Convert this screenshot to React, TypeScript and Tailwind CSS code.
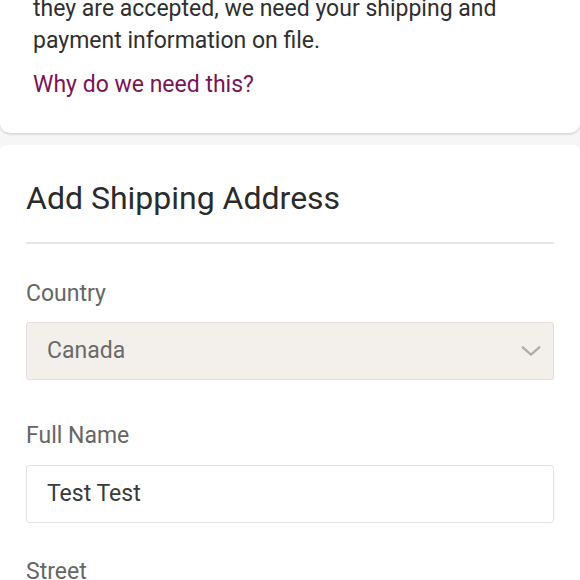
import React from 'react';

const font = { fontFamily: 'Roboto, "Noto Sans", sans-serif' };

function Field({ label, children, gap }: { label: string; children?: React.ReactNode; gap: string }) {
  return (
    <div className={gap}>
      <label className="block text-[23px] leading-[28px] text-[#666]">{label}</label>
      {children}
    </div>
  );
}

export default function App() {
  return (
    <div className="h-[580px] w-[580px] overflow-hidden bg-[#f6f6f6]" style={font}>
      {/* intro card */}
      <div className="rounded-b-[10px] bg-white pb-[32px] pl-[33px] pr-[26px] shadow-[0_1px_3px_rgba(0,0,0,0.18)]">
        <p className="mt-[-7px] text-[23px] leading-[32px] text-[#2f2f2f]">
          they are accepted, we need your shipping and payment information on file.
        </p>
        <a className="mt-[12px] block text-[23px] leading-[32px] text-[#7b1456]">Why do we need this?</a>
      </div>

      {/* shipping form */}
      <div className="mt-[12px] rounded-t-[6px] bg-white px-[26px] pb-10 pt-[33px]">
        <h2 className="text-[32px] leading-[40px] text-[#2b2b2b]">Add Shipping Address</h2>
        <div className="mt-[24px] h-[2px] bg-[#e6e6e6]" />

        <Field label="Country" gap="mt-[36px]">
          <div className="mt-[14px] flex h-[58px] items-center justify-between rounded-[3px] border border-[#e2dfda] bg-[#f3f0ec] pl-[20px] pr-[11px]">
            <span className="text-[23px] text-[#6a6a6a]">Canada</span>
            <svg width="22" height="22" viewBox="0 0 24 24" fill="none" stroke="#b0aeab" strokeWidth="2.6" strokeLinecap="round" strokeLinejoin="round">
              <path d="M3 8l9 8 9-8" />
            </svg>
          </div>
        </Field>

        <Field label="Full Name" gap="mt-[42px]">
          <div className="mt-[15px] flex h-[58px] items-center rounded-[3px] border border-[#e3e3e3] bg-white pl-[20px]">
            <span className="text-[23px] text-[#3a3a3a]">Test Test</span>
          </div>
        </Field>

        <Field label="Street" gap="mt-[35px]" />
      </div>
    </div>
  );
}
